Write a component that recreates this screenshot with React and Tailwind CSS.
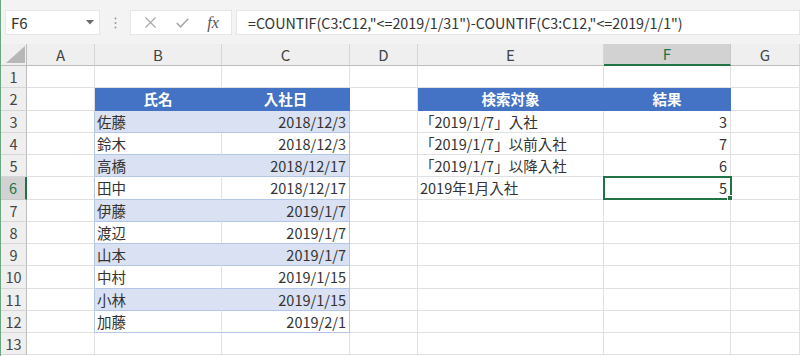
import React from "react";

const ROWS = [
  { n: 1, h: "h-[22px]" },
  { n: 2, h: "h-[23px]", header: true },
  { n: 3, h: "h-[22px]", b: "佐藤", c: "2018/12/3", e: "「2019/1/7」入社", f: "3" },
  { n: 4, h: "h-[22px]", b: "鈴木", c: "2018/12/3", e: "「2019/1/7」以前入社", f: "7" },
  { n: 5, h: "h-[22px]", b: "高橋", c: "2018/12/17", e: "「2019/1/7」以降入社", f: "6" },
  { n: 6, h: "h-[23px]", b: "田中", c: "2018/12/17", e: "2019年1月入社", f: "5", sel: true },
  { n: 7, h: "h-[22px]", b: "伊藤", c: "2019/1/7" },
  { n: 8, h: "h-[22px]", b: "渡辺", c: "2019/1/7" },
  { n: 9, h: "h-[22px]", b: "山本", c: "2019/1/7" },
  { n: 10, h: "h-[23px]", b: "中村", c: "2019/1/15" },
  { n: 11, h: "h-[22px]", b: "小林", c: "2019/1/15" },
  { n: 12, h: "h-[22px]", b: "加藤", c: "2019/2/1" },
  { n: 13, h: "h-[22px]" },
];

const GRID =
  "grid grid-cols-[26px_68px_127px_128px_68px_186px_127px_69px] grid-rows-[100%]";

function Toolbar() {
  return (
    <div className="h-[44px] bg-[#f3f3f3] flex items-start pt-[10px]">
      <div className="ml-[4px] w-[95px] h-[25px] bg-white border border-[#e6e6e6] flex items-center justify-between pl-[5px] pr-[5px]">
        <span className="text-[15px] leading-[20px] text-[#333]">F6</span>
        <svg width="8" height="5" viewBox="0 0 8 5">
          <path d="M0 0 L8 0 L4 4.5 Z" fill="#6b6b6b" />
        </svg>
      </div>
      <div className="w-[30px] h-[25px] flex items-center justify-center">
        <svg width="3" height="12" viewBox="0 0 3 12">
          <circle cx="1.5" cy="1.5" r="1" fill="#9a9a9a" />
          <circle cx="1.5" cy="6" r="1" fill="#9a9a9a" />
          <circle cx="1.5" cy="10.5" r="1" fill="#9a9a9a" />
        </svg>
      </div>
      <div className="w-[102px] h-[25px] bg-white border border-[#e6e6e6] flex items-center">
        <div className="w-[36px] flex justify-center pl-[2px]">
          <svg width="11" height="11" viewBox="0 0 11 11">
            <path d="M0.5 0.5 L10.5 10.5 M10.5 0.5 L0.5 10.5" stroke="#a8a8a8" strokeWidth="1.2" />
          </svg>
        </div>
        <div className="w-[30px] flex justify-center">
          <svg width="13" height="10" viewBox="0 0 13 10">
            <path d="M0.8 5 L4.5 8.8 L12.3 0.8" stroke="#a8a8a8" strokeWidth="1.6" fill="none" />
          </svg>
        </div>
        <div className="flex-1 flex justify-center pr-[2px]">
          <span className="font-['Liberation_Serif',serif] italic text-[16px] text-[#555] leading-none">
            fx
          </span>
        </div>
      </div>
      <div className="ml-[4px] flex-1 h-[25px] bg-white border border-[#e6e6e6] flex items-center pl-[11px]">
        <span className="text-[14.3px] leading-[20px] text-[#333] whitespace-nowrap">
          =COUNTIF(C3:C12,"&lt;=2019/1/31")-COUNTIF(C3:C12,"&lt;=2019/1/1")
        </span>
      </div>
    </div>
  );
}

function ColHeaders() {
  const cols = ["A", "B", "C", "D", "E", "F", "G"];
  return (
    <div className={GRID + " h-[22px]"}>
      <div className="relative bg-[#efefef] border-r border-b border-[#bdbdbd]">
        <svg className="absolute right-[1px] bottom-[2px]" width="19" height="17" viewBox="0 0 19 17">
          <path d="M0 17 L19 17 L19 0 Z" fill="#b7b7b7" />
        </svg>
      </div>
      {cols.map((c) => (
        <div
          key={c}
          className={
            c === "F"
              ? "bg-[#d2d2d2] border-r border-r-[#c8c8c8] border-b-2 border-b-[#217346] flex items-center justify-center text-[15px] leading-[18px] text-[#217346]"
              : "bg-[#efefef] border-r border-r-[#d6d6d6] border-b border-b-[#bdbdbd] flex items-center justify-center text-[15px] leading-[18px] text-[#444]"
          }
        >
          {c}
        </div>
      ))}
    </div>
  );
}

function Row({ r }) {
  const inT1 = r.n >= 3 && r.n <= 12;
  const band = inT1 && r.n % 2 === 1;
  const blue = "bg-[#4472c4] border-[#4472c4] text-white font-bold";
  const base =
    "min-h-0 flex items-center text-[14.5px] leading-[18px] text-[#333] whitespace-nowrap overflow-hidden";

  const rowHead = r.sel
    ? "min-h-0 bg-[#d2d2d2] border-b border-b-[#c8c8c8] border-r-2 border-r-[#217346] flex items-center justify-center text-[14.5px] leading-[18px] text-[#217346]"
    : "min-h-0 bg-[#efefef] border-b border-b-[#d6d6d6] border-r border-r-[#bdbdbd] flex items-center justify-center text-[14.5px] leading-[18px] text-[#444]";

  const aCls =
    base +
    " bg-white border-b border-b-[#e0e0e0] border-r " +
    (inT1 ? "border-r-[#b4c6e7]" : "border-r-[#e0e0e0]");

  let bCls, cCls;
  if (r.header) {
    bCls = base + " justify-center border-r border-b " + blue;
    cCls = base + " justify-center border-r border-b " + blue;
  } else if (inT1) {
    bCls =
      base +
      " pl-[2px] border-b border-b-[#b4c6e7] border-r " +
      (band ? "bg-[#d9e1f2] border-r-[#d9e1f2]" : "bg-white border-r-[#e0e0e0]");
    cCls =
      base +
      " justify-end pr-[3px] border-b border-b-[#b4c6e7] border-r border-r-[#b4c6e7] " +
      (band ? "bg-[#d9e1f2]" : "bg-white");
  } else {
    bCls = base + " bg-white border-r border-b border-[#e0e0e0]";
    cCls = base + " bg-white border-r border-b border-[#e0e0e0]";
  }

  const plain = base + " bg-white border-r border-b border-[#e0e0e0]";
  const eCls = r.header
    ? base + " justify-center border-r border-b " + blue
    : plain + " pl-[2px]";
  const fCls = r.header
    ? base + " justify-center border-r border-b " + blue
    : plain + " justify-end pr-[3px] relative overflow-visible";

  return (
    <div className={GRID + " " + r.h}>
      <div className={rowHead}>{r.n}</div>
      <div className={aCls} />
      <div className={bCls}>{r.header ? "氏名" : r.b}</div>
      <div className={cCls}>{r.header ? "入社日" : r.c}</div>
      <div className={plain} />
      <div className={eCls}>{r.header ? "検索対象" : r.e}</div>
      <div className={fCls}>
        {r.header ? "結果" : r.f}
        {r.sel && (
          <>
            <div className="absolute -left-[1px] -top-[1px] -right-[2px] -bottom-[1px] border-2 border-[#217346] pointer-events-none" />
            <div className="absolute -right-[3px] -bottom-[2px] w-[6px] h-[6px] bg-[#217346] border border-white" />
          </>
        )}
      </div>
      <div className={plain} />
    </div>
  );
}

export default function App() {
  return (
    <div className="w-[800px] h-[356px] overflow-hidden bg-white border-l border-l-[#6aa67f] font-['Noto_Sans_CJK_JP',sans-serif]">
      <Toolbar />
      <ColHeaders />
      {ROWS.map((r) => (
        <Row key={r.n} r={r} />
      ))}
    </div>
  );
}
